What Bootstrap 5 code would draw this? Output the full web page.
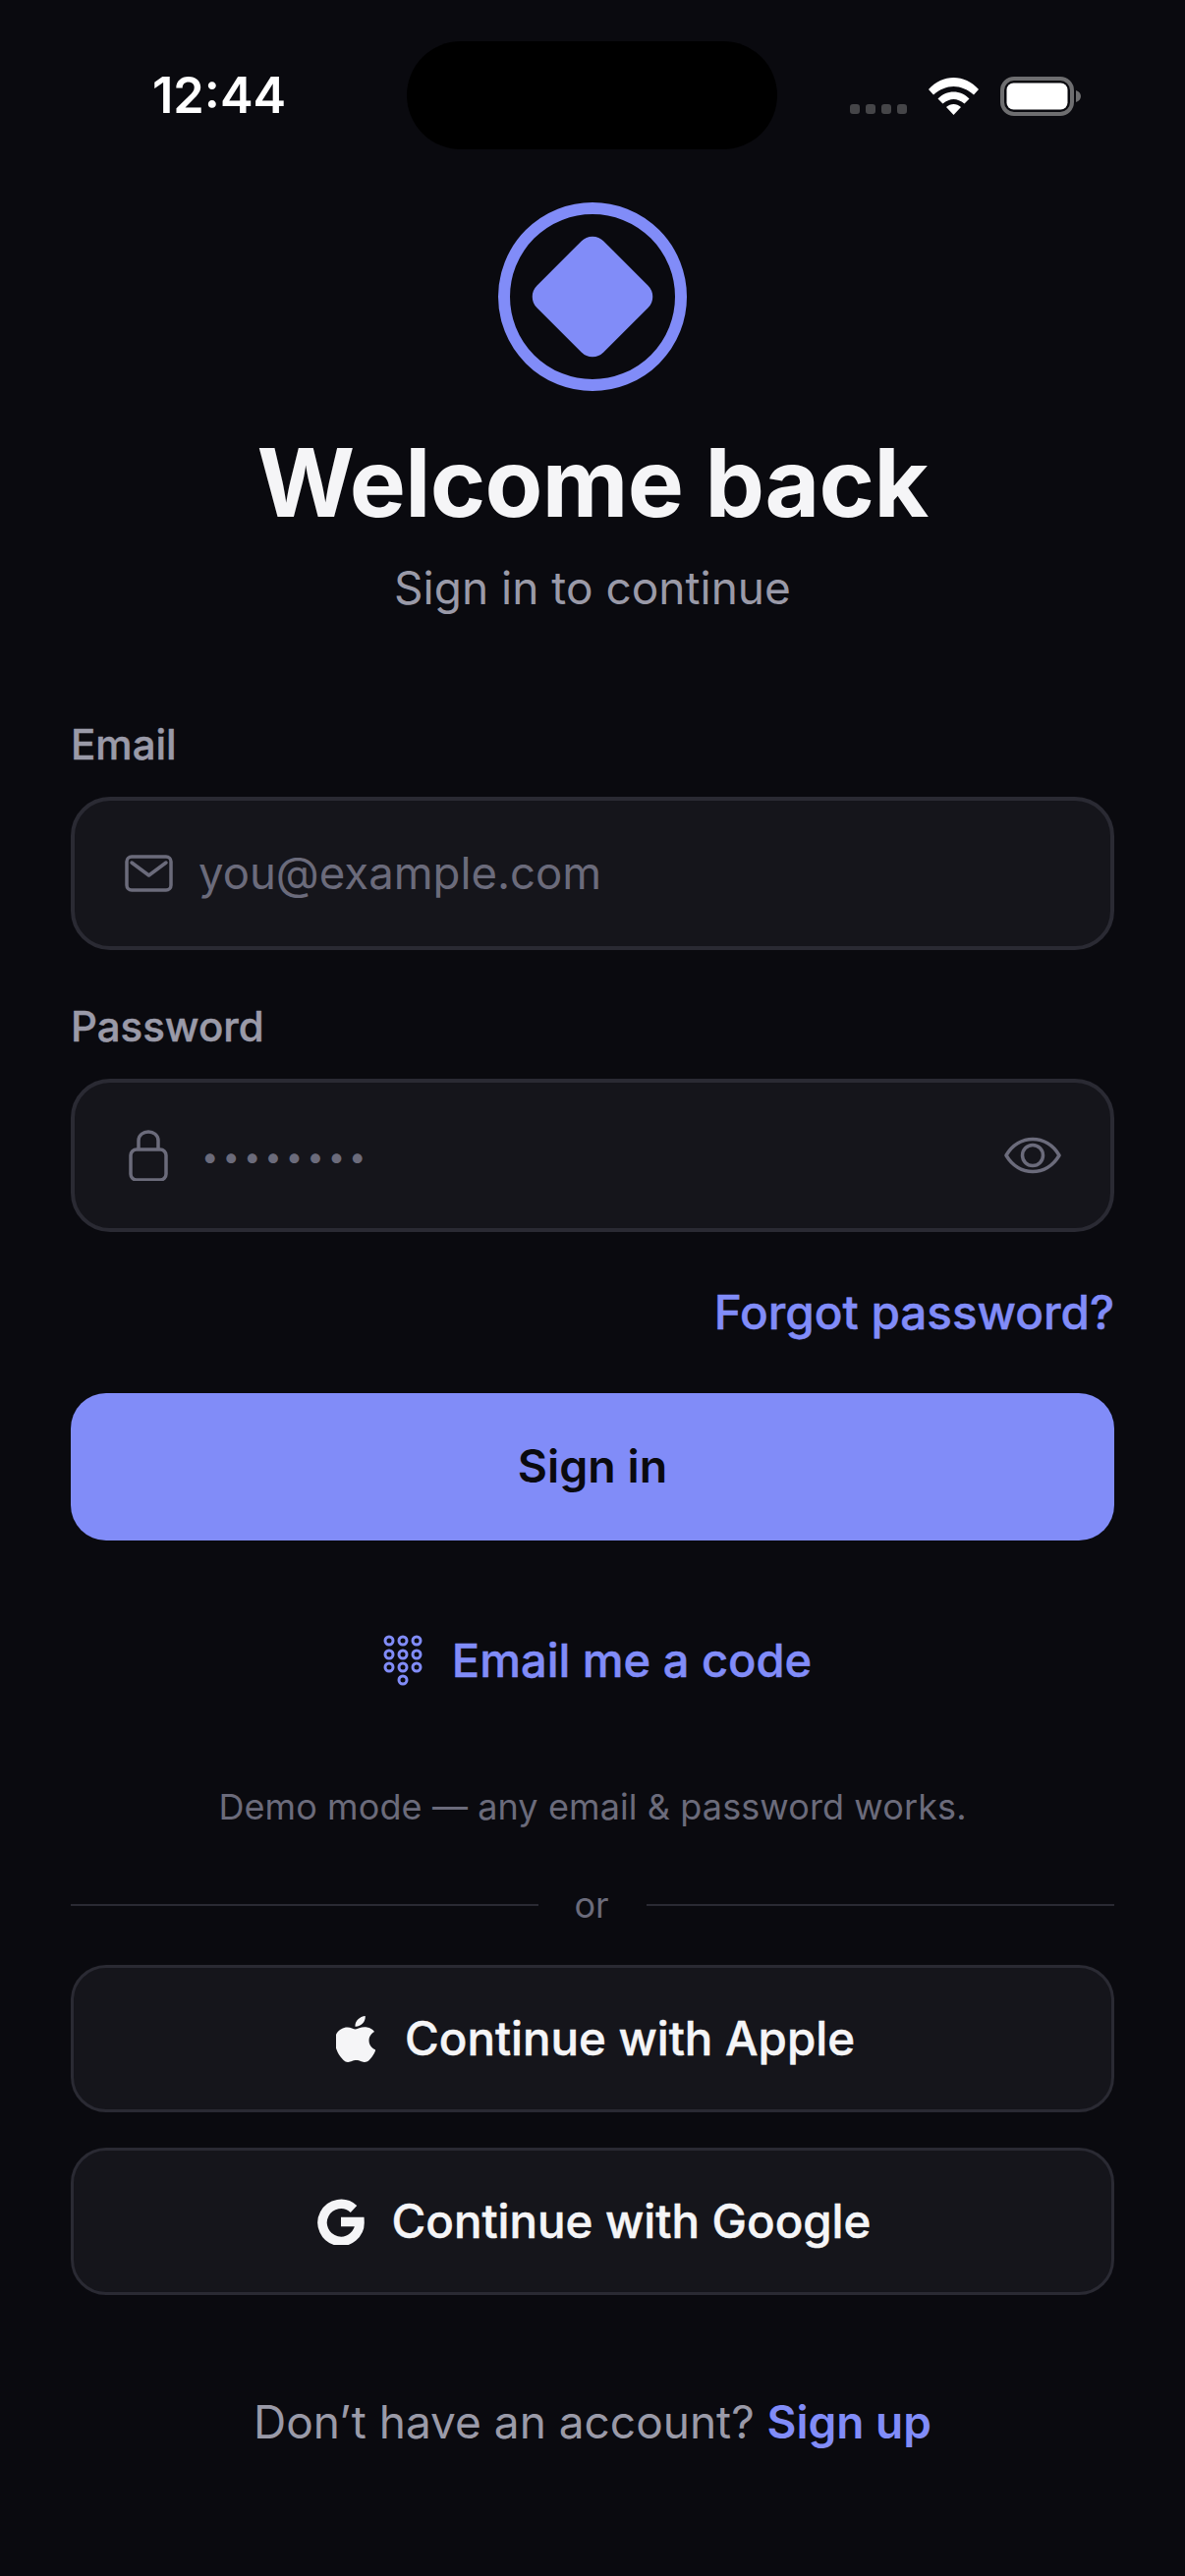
<!DOCTYPE html>
<html lang="en">
<head>
<meta charset="utf-8">
<title>Welcome back</title>
<link href="https://cdn.jsdelivr.net/npm/bootstrap@5.3.0/dist/css/bootstrap.min.css" rel="stylesheet">
<style>
html,body{background:#0a0a0f;}
body{font-family:Inter,"Liberation Sans",sans-serif;color:#f5f5f7;}
.screen{width:1206px;height:2622px;position:relative;overflow:hidden;background:#0a0a0f;}
.statusbar{height:206px;padding:71px 106px 0 155px;}
.clock{font-size:50.5px;font-weight:600;line-height:52px;color:#fff;}
.island{position:absolute;left:414px;top:42px;width:377px;height:110px;border-radius:55px;background:#000;}
.sig-dots{gap:6px;margin-top:35px;}
.sig-dots i{display:block;width:10px;height:10px;border-radius:3px;background:#454548;}
.stat-gap{margin-left:22px;}
.wifi-ico{margin-top:8px;}
.batt-ico{margin-top:7px;}
.body-wrap{padding:0 72px;}
.logo-ring{width:192px;height:192px;border:12px solid #818cf8;border-radius:50%;}
.logo-gem{width:96px;height:96px;background:#818cf8;border-radius:16px;transform:rotate(45deg);}
.headline{font-size:96px;font-weight:700;letter-spacing:-.6px;line-height:116px;color:#f5f5f7;margin:35px 0 0;}
.subhead{font-size:46px;line-height:56px;color:#9a9aa8;margin:21px 0 0;}
.login-form{margin-top:108px;}
.fld-label{font-size:42px;font-weight:500;-webkit-text-stroke:.5px currentColor;line-height:48px;color:#9a9aa8;margin:0 0 29px;display:block;}
.fld-label-next{margin-top:54px;}
.fld{height:156px;background:#15151b;border:4.5px solid #2a2a33;border-radius:40px;padding:0 50px;}
.fld .form-control{background:transparent;border:0;box-shadow:none;padding:0;color:#6b6b7b;font-size:45.5px;line-height:56px;margin-left:26px;border-radius:0;}
.fld .form-control::placeholder{color:#6b6b7b;opacity:1;}
.fld .pw-dots{font-size:31px;letter-spacing:4px;margin-left:29px;padding-top:2px;}
.link-accent{color:#818cf8;font-weight:500;-webkit-text-stroke:.5px currentColor;text-decoration:none;}
.forgot-row{margin-top:54px;}
.forgot{font-size:47.6px;line-height:56px;}
.primary-cta{height:150px;background:#818cf8;border:0;border-radius:36px;font-size:46.5px;font-weight:600;color:#0a0a0f;margin-top:54px;}
.primary-cta:hover{background:#818cf8;color:#0a0a0f;}
.code-row{margin-top:94px;padding-left:10px;}
.code-link{font-size:47px;line-height:56px;gap:30px;}
.demo-note{font-size:36px;line-height:44px;color:#6b6b7b;letter-spacing:.1px;margin-top:99px;}
.or-row{margin-top:56px;}
.or-rule{height:2.5px;background:#2a2a33;}
.or-word{font-size:36px;line-height:44px;color:#6b6b7b;width:110px;text-align:center;padding-right:2px;}
.social{height:150px;background:#15151b;border:3px solid #2a2a33;border-radius:36px;font-size:47.4px;font-weight:500;-webkit-text-stroke:.5px currentColor;color:#f5f5f7;}
.social:hover{background:#15151b;color:#f5f5f7;border-color:#2a2a33;}
.social-apple{margin-top:39px;gap:30px;padding-left:18px;}
.social-google{margin-top:36px;gap:28px;padding-left:15px;}
.signup-line{font-size:46px;line-height:56px;color:#9a9aa8;margin-top:101px;}
.signup-line .link-accent{font-weight:600;-webkit-text-stroke:0;}
</style>
</head>
<body>
<div class="screen">
  <div class="island"></div>
  <div class="statusbar d-flex justify-content-between align-items-start">
    <div class="clock">12:44</div>
    <div class="d-flex align-items-start">
      <div class="sig-dots d-flex"><i></i><i></i><i></i><i></i></div>
      <svg class="stat-gap wifi-ico" width="51" height="38" viewBox="0 0 51 38"><path fill="#fff" d="M0 12 C14 -4 37 -4 51 12 L46 17.500 C33 6 18 6 5 17.500 Z M9.500 21.500 C18 12 33 12 41.500 21.500 L36.500 26.500 C29 20.500 22 20.500 14.500 26.500 Z M18 30 C22.500 26 28.500 26 33 30 L25.500 38 Z"/></svg>
      <svg class="stat-gap batt-ico" width="82" height="40" viewBox="0 0 82 40"><rect x="2" y="2" width="71" height="36" rx="12" fill="none" stroke="#6e6e70" stroke-width="4"/><rect x="6.500" y="6.500" width="62" height="27" rx="7" fill="#fff"/><path d="M77 14 C80 15 82 17 82 20 C82 23 80 25 77 26 Z" fill="#6e6e70"/></svg>
    </div>
  </div>
  <div class="body-wrap">
    <div class="d-flex flex-column align-items-center text-center">
      <div class="logo-ring d-flex align-items-center justify-content-center"><div class="logo-gem"></div></div>
      <h1 class="headline">Welcome back</h1>
      <p class="subhead mb-0">Sign in to continue</p>
    </div>
    <form class="login-form">
      <label class="fld-label">Email</label>
      <div class="fld d-flex align-items-center">
        <svg width="50" height="38" viewBox="0 0 50 38" fill="none" stroke="#6b6b7b" stroke-width="3.5" class="flex-shrink-0"><rect x="3" y="2" width="45" height="34" rx="5"/><path d="M8 8 L25.500 21 L43 8" stroke-linecap="round" stroke-linejoin="round"/></svg>
        <input class="form-control" type="email" placeholder="you@example.com">
      </div>
      <label class="fld-label fld-label-next">Password</label>
      <div class="fld d-flex align-items-center">
        <svg width="50" height="52" viewBox="0 0 50 52" fill="none" stroke="#6b6b7b" stroke-width="3.5" class="flex-shrink-0"><rect x="7" y="20" width="36" height="31" rx="6"/><path d="M15 20 V11 C15 -1 35 -1 35 11 V20"/></svg>
        <input class="form-control pw-dots" type="password" value="password">
        <svg width="58" height="40" viewBox="0 0 58 40" fill="none" stroke="#6b6b7b" stroke-width="3.5" class="flex-shrink-0 ms-auto"><path d="M2 20 C15 -2 43 -2 56 20 C43 42 15 42 2 20 Z" stroke-linejoin="round"/><circle cx="29" cy="20" r="10.500"/></svg>
      </div>
      <div class="text-end forgot-row"><a class="link-accent forgot" href="#">Forgot password?</a></div>
      <button type="button" class="btn primary-cta w-100">Sign in</button>
      <div class="d-flex justify-content-center code-row">
        <a class="link-accent code-link d-flex align-items-center" href="#">
          <svg width="40" height="52" viewBox="0 0 40 52" fill="none" stroke="#818cf8" stroke-width="3"><circle cx="6" cy="6" r="4"/><circle cx="20" cy="6" r="4"/><circle cx="34" cy="6" r="4"/><circle cx="6" cy="20" r="4"/><circle cx="20" cy="20" r="4"/><circle cx="34" cy="20" r="4"/><circle cx="6" cy="33" r="4"/><circle cx="20" cy="33" r="4"/><circle cx="34" cy="33" r="4"/><circle cx="20" cy="46" r="4"/></svg>
          <span>Email me a code</span>
        </a>
      </div>
      <p class="demo-note text-center mb-0">Demo mode — any email &amp; password works.</p>
      <div class="d-flex align-items-center or-row">
        <div class="or-rule flex-grow-1"></div>
        <div class="or-word">or</div>
        <div class="or-rule flex-grow-1"></div>
      </div>
      <button type="button" class="btn social social-apple w-100 d-flex align-items-center justify-content-center">
        <svg width="40" height="47" viewBox="2.800 0 18.800 24" fill="#f5f5f7" preserveAspectRatio="none"><path d="M12.152 6.896c-.948 0-2.415-1.078-3.960-1.040-2.040.027-3.910 1.183-4.961 3.014-2.117 3.675-.546 9.103 1.519 12.090 1.013 1.454 2.208 3.090 3.792 3.039 1.520-.065 2.090-.987 3.935-.987 1.831 0 2.350.987 3.960.948 1.637-.026 2.676-1.480 3.676-2.948 1.156-1.688 1.636-3.325 1.662-3.415-.039-.013-3.182-1.221-3.220-4.857-.026-3.040 2.480-4.494 2.597-4.559-1.429-2.090-3.623-2.324-4.390-2.376-2-.156-3.675 1.090-4.610 1.090zM15.530 3.830c.843-1.012 1.400-2.427 1.245-3.830-1.207.052-2.662.805-3.532 1.818-.780.896-1.454 2.338-1.273 3.714 1.338.104 2.715-.688 3.559-1.701"/></svg>
        <span>Continue with Apple</span>
      </button>
      <button type="button" class="btn social social-google w-100 d-flex align-items-center justify-content-center">
        <svg width="48" height="48" viewBox="0 0 48 48" fill="none" stroke="#f5f5f7" stroke-width="9.500"><path d="M37 11.500 A19 19 0 1 0 43 24.500 H24"/></svg>
        <span>Continue with Google</span>
      </button>
      <p class="signup-line text-center mb-0">Don’t have an account? <a class="link-accent" href="#">Sign up</a></p>
    </form>
  </div>
</div>
<script src="https://cdn.jsdelivr.net/npm/bootstrap@5.3.0/dist/js/bootstrap.bundle.min.js"></script>
</body>
</html>
